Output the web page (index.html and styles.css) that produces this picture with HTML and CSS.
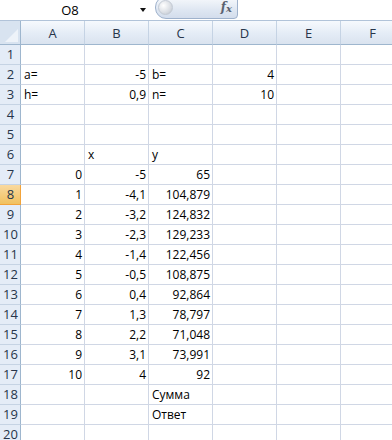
FILE: index.html
```html
<!DOCTYPE html>
<html lang="ru">
<head>
    <meta charset="UTF-8">
    <title>Лист1</title>
    <link rel="stylesheet" href="styles.css">
</head>
<body>
    <div class="toolbar">
        <div class="name-box">O8</div>
        <div class="name-arrow"></div>
        <div class="formula-pill">
            <span class="pill-knob"></span>
            <span class="fx">f<sub>x</sub></span>
        </div>
    </div>
    <div class="sheet" id="sheet"></div>
    <script>
        const rows = {
            2: ['a=', '-5', 'b=', '4'],
            3: ['h=', '0,9', 'n=', '10'],
            6: ['', 'x', 'y'],
            7: ['0', '-5', '65'],
            8: ['1', '-4,1', '104,879'],
            9: ['2', '-3,2', '124,832'],
            10: ['3', '-2,3', '129,233'],
            11: ['4', '-1,4', '122,456'],
            12: ['5', '-0,5', '108,875'],
            13: ['6', '0,4', '92,864'],
            14: ['7', '1,3', '78,797'],
            15: ['8', '2,2', '71,048'],
            16: ['9', '3,1', '73,991'],
            17: ['10', '4', '92'],
            18: ['', '', 'Сумма'],
            19: ['', '', 'Ответ']
        };
        const cols = ['A', 'B', 'C', 'D', 'E', 'F'];
        const sheet = document.getElementById('sheet');

        function addCell(cls, text) {
            const el = document.createElement('div');
            el.className = cls;
            el.textContent = text || '';
            sheet.appendChild(el);
        }

        addCell('corner');
        cols.forEach(c => addCell('col-head', c));
        for (let r = 1; r <= 20; r++) {
            addCell(r === 8 ? 'row-head active' : 'row-head', r);
            const vals = rows[r] || [];
            cols.forEach((c, i) => {
                const v = vals[i] || '';
                const isNum = /^-?[\d,]+$/.test(v);
                addCell(isNum ? 'cell num' : 'cell', v);
            });
        }
    </script>
</body>
</html>
```

FILE: styles.css
```css
body {
    margin: 0;
    width: 392px;
    height: 440px;
    overflow: hidden;
    background: #fff;
    font-family: 'Open Sans', 'Noto Sans', sans-serif;
    font-size: 12px;
    color: #000;
}
.toolbar {
    height: 20px;
    display: flex;
    align-items: center;
    border-bottom: 1px solid #b1c3d9;
    position: relative;
}
.name-box {
    width: 140px;
    text-align: center;
    font-size: 13px;
    line-height: 20px;
}
.name-arrow {
    width: 0;
    height: 0;
    border-left: 3px solid transparent;
    border-right: 3px solid transparent;
    border-top: 4px solid #111;
}
.formula-pill {
    position: absolute;
    left: 155px;
    top: -4px;
    width: 83px;
    height: 23px;
    box-sizing: border-box;
    border: 1px solid #9fb2cc;
    border-radius: 11px 3px 4px 11px;
    background: linear-gradient(#f7f9fc, #dfe7f2 60%, #d3ddec);
}
.pill-knob {
    position: absolute;
    left: 2px;
    top: 3px;
    width: 15px;
    height: 15px;
    border-radius: 50%;
    background: radial-gradient(circle at 35% 35%, #ffffff, #d9dde3 60%, #b9c0ca);
    border: 1px solid #c3cad4;
    box-sizing: border-box;
}
.fx {
    position: absolute;
    right: 5px;
    top: 3px;
    font-family: 'DejaVu Serif', 'Liberation Serif', serif;
    font-style: italic;
    font-weight: bold;
    font-size: 12px;
    color: #5a6270;
}
.fx sub {
    font-size: 10px;
    vertical-align: -1px;
}
.sheet {
    display: grid;
    grid-template-columns: 21px repeat(6, 64px);
    grid-template-rows: 24px;
    grid-auto-rows: 20px;
}
.sheet > div {
    box-sizing: border-box;
    border-right: 1px solid #d0d7e5;
    border-bottom: 1px solid #d0d7e5;
    white-space: nowrap;
    overflow: hidden;
    line-height: 19px;
}
.corner {
    background: #d8e3f0;
    position: relative;
    border-right-color: #9eb6ce !important;
    border-bottom-color: #9eb6ce !important;
}
.corner::after {
    content: '';
    position: absolute;
    right: 2px;
    bottom: 2px;
    width: 0;
    height: 0;
    border-left: 13px solid transparent;
    border-bottom: 13px solid #eef3f9;
}
.sheet > .col-head {
    background: linear-gradient(#f6f9fd, #e4ecf6 55%, #dae3ef);
    border-right-color: #c5d3e4;
    border-bottom-color: #9eb6ce;
    text-align: center;
    line-height: 24px;
    font-size: 13px;
    color: #27354a;
}
.sheet > .row-head {
    background: #e4ecf7;
    border-right-color: #9eb6ce;
    border-bottom-color: #c5d3e4;
    text-align: center;
    font-size: 13px;
    color: #27354a;
    padding-left: 1px;
}
.sheet > .row-head.active {
    background: linear-gradient(#f9d99f, #f1c15f);
    border-right-color: #f2a33a;
    border-bottom-color: #f2a33a;
}
.cell {
    padding: 0 3px;
}
.cell.num {
    text-align: right;
    padding-right: 2px;
}
```
